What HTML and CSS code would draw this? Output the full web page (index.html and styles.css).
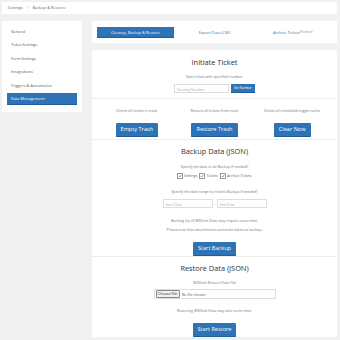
FILE: index.html
```html
<!DOCTYPE html>
<html lang="en">
<head>
    <meta charset="UTF-8">
    <title>Backup &amp; Restore</title>
    <link rel="stylesheet" href="styles.css">
</head>
<body>
    <div class="crumb">Settings <span class="sep">/</span> Backup &amp; Restore</div>

    <div class="layout">
        <div class="sidebar">
            <div class="side-item">General</div>
            <div class="side-item">Ticket Settings</div>
            <div class="side-item">Form Settings</div>
            <div class="side-item">Integrations</div>
            <div class="side-item">Triggers &amp; Automation</div>
            <div class="side-item active">Data Management</div>
        </div>

        <div class="main">
            <div class="card tabs">
                <div class="tab active">Cleanup, Backup &amp; Restore</div>
                <div class="tab">Export Data (CSV)</div>
                <div class="tab">Archive Tickets<span class="premium">(Premium)</span></div>
            </div>

            <div class="card panel">
                <div class="section initiate">
                    <h2>Initiate Ticket</h2>
                    <p class="note">Start ticket with specified number</p>
                    <div class="inline-row">
                        <div class="field num">Starting Number</div>
                        <div class="btn small">Set Number</div>
                    </div>
                </div>

                <div class="section cleanup">
                    <div class="col">
                        <p class="note">Delete all tickets in trash</p>
                        <div class="btn big">Empty Trash</div>
                    </div>
                    <div class="col">
                        <p class="note">Restore all tickets from trash</p>
                        <div class="btn big">Restore Trash</div>
                    </div>
                    <div class="col">
                        <p class="note">Delete all scheduled trigger cache</p>
                        <div class="btn big">Clear Now</div>
                    </div>
                </div>

                <div class="section backup">
                    <h2>Backup Data (JSON)</h2>
                    <p class="note q1">Specify the data to be Backup if needed?</p>
                    <div class="checks">
                        <span class="check"><span class="box"><svg viewBox="0 0 10 10"><path d="M2 5.2 L4.2 7.4 L8.4 2.2" fill="none" stroke="#2e73b5" stroke-width="1.8"/></svg></span>Settings</span>
                        <span class="check"><span class="box"><svg viewBox="0 0 10 10"><path d="M2 5.2 L4.2 7.4 L8.4 2.2" fill="none" stroke="#2e73b5" stroke-width="1.8"/></svg></span>Tickets</span>
                        <span class="check"><span class="box"><svg viewBox="0 0 10 10"><path d="M2 5.2 L4.2 7.4 L8.4 2.2" fill="none" stroke="#2e73b5" stroke-width="1.8"/></svg></span>Archive Tickets</span>
                    </div>
                    <p class="note q2">Specify the date range for tickets Backup if needed?</p>
                    <div class="inline-row dates">
                        <div class="field date">Start Date</div>
                        <span class="dash">-</span>
                        <div class="field date">End Date</div>
                    </div>
                    <p class="note q3">Backing Up of WSDesk Data may require some time.</p>
                    <p class="note q4">Please note that attachments cannot be taken as backup.</p>
                    <div class="btn big go">Start Backup</div>
                </div>

                <div class="section restore">
                    <h2>Restore Data (JSON)</h2>
                    <p class="note r1">WSDesk Restore Data File</p>
                    <div class="file">
                        <span class="file-btn">Choose File</span>
                        <span class="file-name">No file chosen</span>
                    </div>
                    <p class="note r2">Restoring WSDesk Data may take some time.</p>
                    <div class="btn big go2">Start Restore</div>
                </div>
            </div>
        </div>
    </div>
</body>
</html>
```

FILE: styles.css
```css
body {
    margin: 0;
    padding: 2px 3px 0 2px;
    background: #f1f1f1;
    font-family: "Open Sans", "Liberation Sans", sans-serif;
    color: #555;
}

.crumb {
    height: 12px;
    line-height: 12px;
    background: #fff;
    font-size: 4px;
    color: #666;
    padding-left: 6px;
    margin-bottom: 7px;
}

.crumb .sep {
    margin: 0 3px;
    color: #999;
}

.layout {
    display: flex;
    gap: 10px;
    align-items: flex-start;
}

.sidebar {
    width: 80px;
    background: #fff;
    padding: 4.5px 5px 7px;
    box-sizing: border-box;
}

.side-item {
    height: 12px;
    line-height: 12px;
    margin-bottom: 1.5px;
    padding-left: 4px;
    font-size: 3.9px;
    color: #555;
}

.side-item:last-child {
    margin-bottom: 0;
}

.side-item.active {
    background: #2e73b5;
    color: #fff;
    border-bottom: 1px solid #1f5d96;
    box-sizing: border-box;
}

.main {
    flex: 1;
}

.card {
    background: #fff;
}

.tabs {
    display: grid;
    grid-template-columns: repeat(3, 1fr);
    padding: 6px 5px 5px;
    margin-bottom: 7px;
}

.tab {
    height: 11px;
    line-height: 11px;
    text-align: center;
    font-size: 3.9px;
    color: #3b6fa5;
}

.tab.active {
    background: #2e73b5;
    color: #fff;
    width: 77px;
    border-bottom: 1px solid #1f5d96;
    box-sizing: border-box;
}

.premium {
    font-size: 2.6px;
    color: #888;
    position: relative;
    top: -1.5px;
}

.section {
    text-align: center;
    border-bottom: 1px solid #eee;
    box-sizing: border-box;
}

.section:last-child {
    border-bottom: none;
}

h2 {
    margin: 0;
    font-size: 7.4px;
    line-height: 12px;
    font-weight: 400;
    color: #333;
}

.note {
    margin: 0;
    font-size: 3.6px;
    line-height: 6px;
    color: #777;
}

.inline-row {
    display: flex;
    justify-content: center;
    align-items: center;
}

.field {
    height: 9px;
    line-height: 9px;
    border: 1px solid #ddd;
    box-sizing: border-box;
    text-align: left;
    padding-left: 2px;
    font-size: 3.5px;
    color: #aaa;
}

.btn {
    background: #2e73b5;
    color: #fff;
    border-bottom: 1px solid #1f5d96;
    box-sizing: border-box;
    display: inline-block;
}

.btn.small {
    height: 9px;
    line-height: 8px;
    font-size: 3.2px;
    padding: 0 3px;
    margin-left: 2px;
}

.btn.big {
    height: 14px;
    line-height: 13px;
    font-size: 5.6px;
    padding: 0 5px;
    border-radius: 1px;
}

/* Initiate ticket */
.initiate {
    height: 49px;
    padding-top: 6px;
}

.initiate .note {
    margin-top: 6px;
}

.initiate .inline-row {
    margin-top: 4px;
}

.field.num {
    width: 55px;
}

/* Cleanup columns */
.cleanup {
    height: 41px;
    display: grid;
    grid-template-columns: repeat(3, 1fr);
    padding: 9px 6px 0;
}

.cleanup .btn {
    margin-top: 3px;
}

/* Backup */
.backup {
    height: 117px;
    padding-top: 5px;
}

.q1 {
    margin-top: 7px;
}

.checks {
    margin-top: 3px;
    height: 6px;
    line-height: 6px;
    font-size: 3.6px;
    color: #666;
    display: flex;
    justify-content: center;
    gap: 2px;
}

.check {
    display: inline-flex;
    align-items: center;
}

.box {
    width: 3.5px;
    height: 3.5px;
    border: 0.5px solid #999;
    margin-right: 1.5px;
    display: inline-block;
    background: #fff;
}

.box svg {
    width: 4px;
    height: 4px;
    display: block;
    margin: -0.5px 0 0 0;
}

.q2 {
    margin-top: 10px;
}

.dates {
    margin-top: 4px;
}

.field.date {
    width: 50px;
}

.dash {
    font-size: 3.5px;
    color: #666;
    width: 4px;
}

.q3 {
    margin-top: 10px;
}

.q4 {
    margin-top: 3px;
}

.go {
    margin-top: 3px;
}

/* Restore */
.restore {
    height: 80px;
    padding-top: 5px;
}

.r1 {
    margin-top: 6px;
}

.file {
    width: 122px;
    height: 10px;
    margin: 3px auto 0;
    border: 1px solid #ddd;
    box-sizing: border-box;
    display: flex;
    align-items: center;
    padding-left: 1px;
    font-size: 3.6px;
    color: #555;
}

.file-btn {
    background: #efefef;
    border: 0.5px solid #888;
    border-radius: 1px;
    padding: 0 1.5px;
    line-height: 5.5px;
    color: #222;
    margin-right: 2px;
}

.r2 {
    margin-top: 9px;
}

.go2 {
    margin-top: 4px;
}
```
